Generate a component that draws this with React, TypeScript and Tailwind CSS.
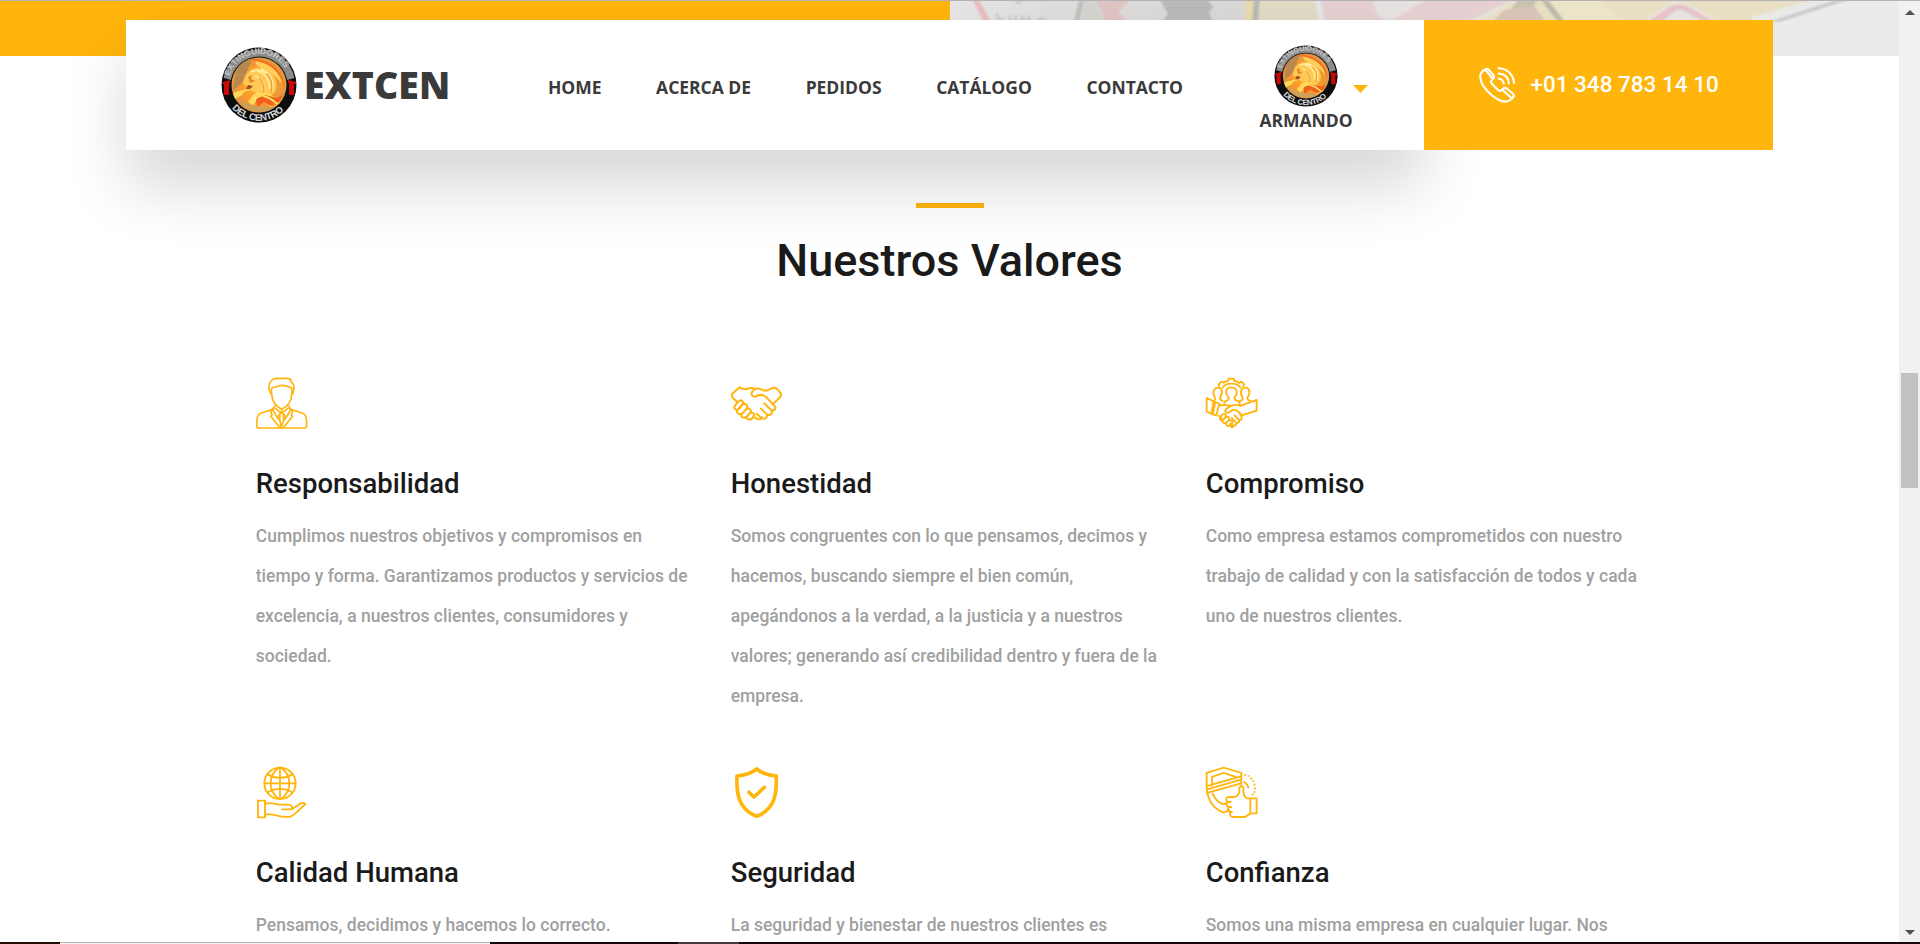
import type { ReactNode } from 'react';

const NAV = ['HOME', 'ACERCA DE', 'PEDIDOS', 'CATÁLOGO', 'CONTACTO'];

function Icon({ children, width = 5 }: { children: ReactNode; width?: number }) {
  return (
    <svg
      viewBox="48 52 154 154"
      className="block size-[51.3px] overflow-visible"
      fill="none"
      stroke="#ffb50b"
      strokeWidth={width}
      strokeLinejoin="round"
      strokeLinecap="round"
    >
      {children}
    </svg>
  );
}

const PersonIcon = () => (
  <Icon>
    <path d="M93 103C85 92 85 72 93 64C98 57 106 56 116 56H140C148 56 152 58 154 62C151 66 153 69 158 70C163 76 163 94 158 103" />
    <path d="M95 101C92 86 96 83 104 82C115 81 118 77 127 77C139 77 141 82 151 83C157 86 157 90 155 103C155 126 143 140 125 149C107 140 95 126 95 101Z" />
    <path d="M101 148L64 160C53 164 50 172 50 198C50 203 52 205 57 205H193C198 205 200 203 200 198C200 172 197 164 186 160L149 148" />
    <path d="M105 139L92 155L96 166L92 170L119 203M145 139L158 155L154 166L158 170L131 203M98 151L112 174L122 159L107 147M152 151L138 174L128 159L143 147M120 162L119 180L124 203L131 180L130 162M125 152V160M112 174L118 182M138 174L132 182" />
  </Icon>
);

const HandshakeIcon = () => (
  <Icon width={6}>
    <path d="M121 88C111 82 101 86 94 88C87 90 82 88 74 83L51 103C49 108 51 112 54 115L67 128" />
    <path d="M126 109C119 114 111 109 109 102C112 92 122 84 133 87C143 92 148 95 158 92C168 88 174 83 180 84C188 86 195 98 198 102C200 107 197 111 192 116L176 132" />
    <path d="M126 108C137 104 146 105 153 112L178 138C187 148 175 158 166 149L148 131" />
    <path d="M169 151C176 162 163 172 153 162L138 147M156 165C158 178 145 181 137 173L125 162M141 173C137 182 126 180 120 173" />
    <path d="M60 138L70 126C79 117 88 127 82 135L73 147C65 155 54 147 60 138ZM67 152L80 136C89 128 101 137 95 146L84 159C74 168 62 160 67 152ZM80 164L92 150C101 142 111 150 106 159L97 170C88 179 75 172 80 164ZM95 172L102 163C110 155 121 162 116 171C108 184 95 181 95 172Z" />
  </Icon>
);

const TeamIcon = () => (
  <Icon width={5.5}>
    <path d="M88 79L86 74L94 66L101 69L108 65L115 63V57H132V63L141 66L148 70L155 66L163 74L160 80M97 84C108 68 140 68 152 84" />
    <path d="M72 122C76 120 77 116 74 112C64 94 76 84 83 84C94 84 101 96 91 112C89 119 91 122 98 124M103 130C104 122 118 124 117 115C101 97 110 83 124 83C139 83 147 98 133 115C132 124 146 121 149 129V136M150 124C158 122 160 118 157 112C147 95 157 84 166 84C178 84 183 98 173 113C171 119 174 122 182 124" />
    <path d="M50 155V115L71 125L64 163L50 155M76 127L88 132L79 168L66 163M76 127L69 162M88 138C105 132 115 140 125 138" />
    <path d="M151 139C137 131 118 138 106 151C104 162 116 163 127 151C137 149 144 153 151 162L155 167L200 153V121L151 139M86 168L95 175" />
    <path d="M149 161L155 172C157 181 148 184 143 177L134 167M148 181C150 190 140 193 134 185L125 175M139 190C140 200 128 201 120 192" />
    <path d="M91 172L98 164C105 160 111 167 106 173L99 181C92 184 87 178 91 172ZM99 181L107 173C115 168 121 176 116 182L109 189C101 193 94 187 99 181ZM109 189L116 183C124 178 131 187 125 193C118 204 105 198 109 189Z" />
    <path d="M119 198L126 204L134 198" />
  </Icon>
);

const GlobeHandIcon = () => (
  <Icon width={5.5}>
    <circle cx="120" cy="101" r="47" />
    <path d="M120 54V148M73 101H167M115 55C84 80 84 122 115 147M125 55C156 80 156 122 125 147M83 73C100 88 140 88 157 73M83 129C100 114 140 114 157 129" />
    <path d="M54 153H75V203H54ZM75 163C98 155 104 165 120 165H143C154 165 159 172 156 179H126M156 179L181 162C188 158 194 160 196 164C180 177 170 192 153 200C130 207 105 194 94 194H75" strokeLinejoin="miter" />
  </Icon>
);

const ShieldIcon = () => (
  <Icon width={11}>
    <path d="M125 58C108 72 88 77 66 79C64 132 70 179 125 200C180 179 186 132 184 79C162 77 142 72 125 58Z" />
    <path d="M102 128L117 142L148 113" />
  </Icon>
);

const TrustIcon = () => (
  <Icon width={5.5}>
    <path d="M154 108V70L101 54L50 70V112C52 152 70 177 101 189L118 182M66 108V82L101 70L137 82M68 132C75 149 84 159 101 164L108 161" strokeLinejoin="miter" />
    <path d="M52 109L153 80M52 119L153 90M52 130L153 101" />
    <path d="M163 97C169 101 173 106 175 113" />
    <path d="M165 76H166M175 79H176M183 86H184M189 94H190M193 105H194M194 116H195M193 127H194M188 134H189" strokeWidth="5" strokeLinecap="square" />
    <path d="M180 146H170C160 141 160 128 160 114C158 108 149 109 148 115V128C145 135 139 141 133 142H114C107 145 107 153 114 157H122M114 157C107 162 109 170 116 172H124M116 172C112 179 114 185 121 187H126M121 187C118 195 121 201 128 202H165L181 192M181 146H200V191H181Z" />
  </Icon>
);

function Emblem({ className, id }: { className: string; id: string }) {
  return (
    <svg viewBox="0 0 76 76" preserveAspectRatio="none" className={className}>
      <defs>
        <radialGradient id={`${id}-fire`} cx="0.5" cy="0.5" r="0.55">
          <stop offset="0" stopColor="#ffb52e" />
          <stop offset="0.55" stopColor="#f99a2a" />
          <stop offset="1" stopColor="#d9974e" />
        </radialGradient>
        <filter id={`${id}-soft`} x="-5%" y="-5%" width="110%" height="110%">
          <feGaussianBlur stdDeviation="0.6" />
        </filter>
        <path id={`${id}-top`} d="M8 32A30.500 30.500 0 0 1 68 32" />
        <path id={`${id}-bottom`} d="M4.500 50A35.500 35.500 0 0 0 71.500 50" />
      </defs>
      <circle cx="38" cy="38" r="37.500" fill="#0c0d0d" />
      <path d="M2.500 31A36.300 36.300 0 0 1 73.500 31L66 33A29 29 0 0 0 10 33Z" fill="#8b8b8b" />
      <circle cx="38" cy="38" r="28.500" fill="#151210" />
      <circle cx="38" cy="38" r="27.500" fill={`url(#${id}-fire)`} />
      <g filter={`url(#${id}-soft)`}>
        <path d="M30 12C48 11 64 24 63.500 42C61 30 54 20 41 17C35 15 31 14 30 12Z" fill="#f8701c" />
        <path d="M34 14C50 16 60 27 61 37C55 29 46 22 36 19Z" fill="#ffcf5a" />
        <path d="M15 24C18 17 25 13 31 13L27 22L21 36L12 43Z" fill="#b98850" />
        <path d="M24 30C27 23 36 18 44 22C53 25 57 35 55 43C51 51 42 52 37 47L30 43L23 45L26 39L22 37Z" fill="#ffc956" />
        <path d="M27 30L31 28L30 32L34 34L29 36Z" fill="#e98626" />
        <path d="M27 38L32 39L29 42L25 42Z" fill="#a0481c" />
        <path d="M36 24C44 26 50 33 48 42M40 22C49 26 54 34 51 44M34 29C40 31 44 36 42 44M30 25C36 22 41 23 45 26" fill="none" stroke="#fff0a0" strokeWidth="1.500" />
        <path d="M38 31C42 35 44 39 42 46M46 27C51 33 52 38 50 46" fill="none" stroke="#f39a32" strokeWidth="1.200" />
        <path d="M12 46L25 42L21 48L14 52ZM33 47C42 43 54 48 59 56L50 60L38 50L32 58L27 55Z" fill="#ffda54" />
        <path d="M35 52L44 48L56 51L61 48C60 54 56 58 50 59L43 55L36 60Z" fill="#f2601f" />
        <path d="M42 49C48 50 53 54 56 57M36 50L30 57" fill="none" stroke="#ffe066" strokeWidth="2" />
        <path d="M18 54C25 57 39 61 52 61C42 67 25 65 18 54Z" fill="#c8a25a" />
      </g>
      <path d="M2 35L9 33V36H8V48H3V37H1ZM67 33L75 35V37H73V48H68V36H67Z" fill="#c90808" />
      <text fill="#c6c6c6" fontSize="8.500" fontFamily="Liberation Sans, sans-serif">
        <textPath href={`#${id}-top`} startOffset="3" textLength="70">EXTINGUIDORES</textPath>
      </text>
      <text fill="#d6dcdc" fontSize="9.500" fontFamily="Liberation Sans, sans-serif">
        <textPath href={`#${id}-bottom`} startOffset="13" textLength="58">DEL CENTRO</textPath>
      </text>
    </svg>
  );
}

function PhotoStrip() {
  return (
    <svg viewBox="950 1 949 55" preserveAspectRatio="none" className="h-[55px] w-[949px] shrink-0">
      <defs>
        <linearGradient id="photo" x1="0" x2="1" y1="0" y2="0">
          <stop offset="0" stopColor="#e6e6e6" />
          <stop offset="0.12" stopColor="#dedddc" />
          <stop offset="0.3" stopColor="#d9d8d6" />
          <stop offset="0.9" stopColor="#ebebeb" />
        </linearGradient>
        <filter id="soft" x="-5%" y="-20%" width="110%" height="140%">
          <feGaussianBlur stdDeviation="0.9" />
        </filter>
      </defs>
      <rect x="950" y="1" width="949" height="55" fill="url(#photo)" />
      <g filter="url(#soft)">
        <path d="M973 0H979L991 22H984Z" fill="#e9bcbc" />
        <path d="M997 13L998 19H1004M1009 15L1010 21L1015 22L1016 16M1021 22L1022 17L1026 22L1029 17L1030 22M1036 22L1041 18L1046 20M1015 0L1018 3L1022 0" fill="none" stroke="#c6c5c5" strokeWidth="2" />
        <path d="M1079 0H1084L1079 22H1074Z" fill="#bfbfbf" />
        <path d="M1084 0H1099L1108 22H1080Z" fill="#d5d5cf" />
        <path d="M1096 0H1131L1118 11L1127 22H1107Z" fill="#dfc4c3" />
        <path d="M1160 0H1208L1213 7L1209 12L1213 22H1162L1168 14Z" fill="#b9b9b9" />
        <path d="M1246 0H1254L1252 22H1245Z" fill="#eadba8" />
        <path d="M1254 0H1260L1258 22H1252Z" fill="#b9b8b7" />
        <path d="M1260 0H1313L1320 22H1258Z" fill="#e1dac5" />
        <path d="M1315 0H1320L1325 22H1320Z" fill="#e9e7e5" />
        <path d="M1321 0H1511L1468 22H1326Z" fill="#e5cfd0" />
        <path d="M1372 0H1426L1398 17Q1386 24 1377 14Z" fill="#e5e2e1" />
        <path d="M1516 0H1812L1754 22H1468Z" fill="#e8dfc3" />
        <path d="M1511 0H1518L1476 22H1466Z" fill="#e6e2db" />
        <path d="M1504 10L1534 6L1546 22H1492Z" fill="#d9c3b6" />
        <path d="M1518 0H1537L1533 7L1511 9Z" fill="#c9c1b1" />
        <path d="M1541 0H1548L1565 22H1558Z" fill="#bdb9ac" />
        <path d="M1549 0H1600L1623 22H1566Z" fill="#ebe4c9" />
        <path d="M1645 22L1670 5Q1680 1 1690 6L1716 22Z" fill="#e5c3c6" stroke="#ece7e4" strokeWidth="2" />
        <path d="M1660 22L1675 11Q1681 8 1687 12L1703 22Z" fill="#e5e3e3" />
        <path d="M1812 0L1752 17V22H1800L1850 0Z" fill="#e9e9e7" />
        <path d="M1836 0L1768 22H1780L1848 0Z" fill="#c9c9c9" />
        <path d="M1850 0H1910V60H1740V22H1780Z" fill="#ebebeb" />
      </g>
    </svg>
  );
}

function PhoneIcon() {
  return (
    <svg viewBox="0 0 36 36" className="size-9" fill="none" stroke="#fff" strokeWidth="2.100" strokeLinecap="round" strokeLinejoin="round">
      <path d="M6 2.500C8 1.200 9 2 10 3L14.500 8.500C16 10.500 14.500 12 12.500 13.500C11.500 14.500 12 15.500 13 17L19 23C20.500 24.500 21.500 24 22.500 23L24 21.700C25.300 20.600 26.500 20.500 28 21.700L33.500 26.300C36 28.500 34.500 30.500 32 32.500C27 36.500 20 34.500 12 27.500C3.500 20 1 13 1.300 8.500C1.600 5.500 3.500 4 6 2.500Z" />
      <path d="M6.500 3L13 11M23.500 23L32 30.500M19.500 1.300C28 1.500 34.500 7.500 35 16M19.500 6.500C25.500 7 29.500 10.500 29.800 16.500M19.500 11.500C22.500 12 24.300 13.500 24.800 16.500" />
    </svg>
  );
}

const VALUES: { title: string; icon: ReactNode; lines: string[] }[] = [
  {
    title: 'Responsabilidad',
    icon: <PersonIcon />,
    lines: [
      'Cumplimos nuestros objetivos y compromisos en',
      'tiempo y forma. Garantizamos productos y servicios de',
      'excelencia, a nuestros clientes, consumidores y',
      'sociedad.',
    ],
  },
  {
    title: 'Honestidad',
    icon: <HandshakeIcon />,
    lines: [
      'Somos congruentes con lo que pensamos, decimos y',
      'hacemos, buscando siempre el bien común,',
      'apegándonos a la verdad, a la justicia y a nuestros',
      'valores; generando así credibilidad dentro y fuera de la',
      'empresa.',
    ],
  },
  {
    title: 'Compromiso',
    icon: <TeamIcon />,
    lines: [
      'Como empresa estamos comprometidos con nuestro',
      'trabajo de calidad y con la satisfacción de todos y cada',
      'uno de nuestros clientes.',
    ],
  },
  { title: 'Calidad Humana', icon: <GlobeHandIcon />, lines: ['Pensamos, decidimos y hacemos lo correcto.'] },
  { title: 'Seguridad', icon: <ShieldIcon />, lines: ['La seguridad y bienestar de nuestros clientes es'] },
  { title: 'Confianza', icon: <TrustIcon />, lines: ['Somos una misma empresa en cualquier lugar. Nos'] },
];

function Header() {
  return (
    <header className="absolute left-[126.400px] top-5 flex h-[130px] w-[1647.100px]">
      <div className="flex w-[1298px] shrink-0 bg-white pl-[94.600px] font-['Open_Sans',sans-serif] font-bold text-[#3a3a3a] shadow-[0_37px_62px_rgba(0,0,0,0.155)]">
        <div className="flex w-[327px] shrink-0 items-center">
          <Emblem id="brand" className="size-[76px] shrink-0" />
          <span className="ml-[7px] text-[37.500px] leading-none font-extrabold tracking-[0.050px]">EXTCEN</span>
        </div>
        <nav className="flex w-[635px] shrink-0 items-start justify-between pt-[54px] text-[17.500px] leading-[27px] font-bold tracking-[-0.020px] whitespace-nowrap">
          {NAV.map((item) => (
            <a key={item}>{item}</a>
          ))}
        </nav>
        <div className="ml-[75.500px] flex shrink-0 items-start pt-[25px]">
          <div className="flex w-[95px] flex-col items-center">
            <Emblem id="user" className="h-[62px] w-16" />
            <span className="text-[17.500px] leading-[27px] font-bold tracking-[-0.020px]">ARMANDO</span>
          </div>
          <svg viewBox="0 0 15 8" className="mt-[40px] h-2 w-[15px]">
            <path d="M0 0H15L7.500 8Z" fill="#ffb50b" />
          </svg>
        </div>
      </div>
      <div className="relative flex flex-1 items-center bg-[#ffb50b] pl-[55px] text-white">
        <PhoneIcon />
        <span className="mb-0.5 ml-[15px] text-[22.500px] leading-none font-medium whitespace-nowrap">+01 348 783 14 10</span>
      </div>
    </header>
  );
}

export default function App() {
  return (
    <div className="relative flex h-[944px] w-[1920px] flex-col overflow-hidden bg-white font-[Roboto,sans-serif]">
      <div className="h-px shrink-0 bg-[#b4b2b6]" />
      <div className="flex min-h-0 flex-1">
        <main className="w-[1899px] shrink-0 overflow-hidden">
          <div className="flex h-[55px]">
            <div className="w-[950px] bg-[#ffb50b]" />
            <PhotoStrip />
          </div>
          <section className="flex flex-col items-center pt-[147px]">
            <div className="h-[5px] w-[68px] bg-[#ffb50b]" />
            <h2 className="mt-[25px] text-[45px] leading-[56px] font-medium text-[#1a1a1a]">Nuestros Valores</h2>
            <div className="mt-[88px] grid w-[1425px] grid-cols-3">
              {VALUES.map(({ title, icon, lines }) => (
                <article key={title} className="h-[389.550px] px-[18.750px]">
                  {icon}
                  <h3 className="mt-[36.500px] text-[27.500px] leading-[38px] font-medium text-[#1a1a1a]">{title}</h3>
                  <p className="mt-[13px] text-[17.500px] leading-10 font-medium whitespace-nowrap text-[#a0a0a0]">
                    {lines.map((line) => (
                      <span key={line} className="block">
                        {line}
                      </span>
                    ))}
                  </p>
                </article>
              ))}
            </div>
          </section>
        </main>
        <aside className="flex flex-1 flex-col items-center bg-[#f1f1f1]">
          <svg viewBox="0 0 10 5" className="mt-[9px] h-[5px] w-[10px]">
            <path d="M5 0L10 5H0Z" fill="#505050" />
          </svg>
          <div className="mt-[358px] h-[115px] w-[17px] bg-[#c1c1c1]" />
          <svg viewBox="0 0 10 5" className="mt-auto mb-[7px] h-[5px] w-[10px]">
            <path d="M0 0H10L5 5Z" fill="#505050" />
          </svg>
        </aside>
      </div>
      <div className="flex h-0.5 shrink-0 bg-[#14060a]">
        <div className="w-[60px] bg-[#240c04]" />
        <div className="w-[430px] border-t border-[#b9b9b9] bg-[#f3f3f3]" />
        <div className="w-[188px]" />
        <div className="w-[61px] bg-[#463c3e]" />
      </div>
      <Header />
    </div>
  );
}
